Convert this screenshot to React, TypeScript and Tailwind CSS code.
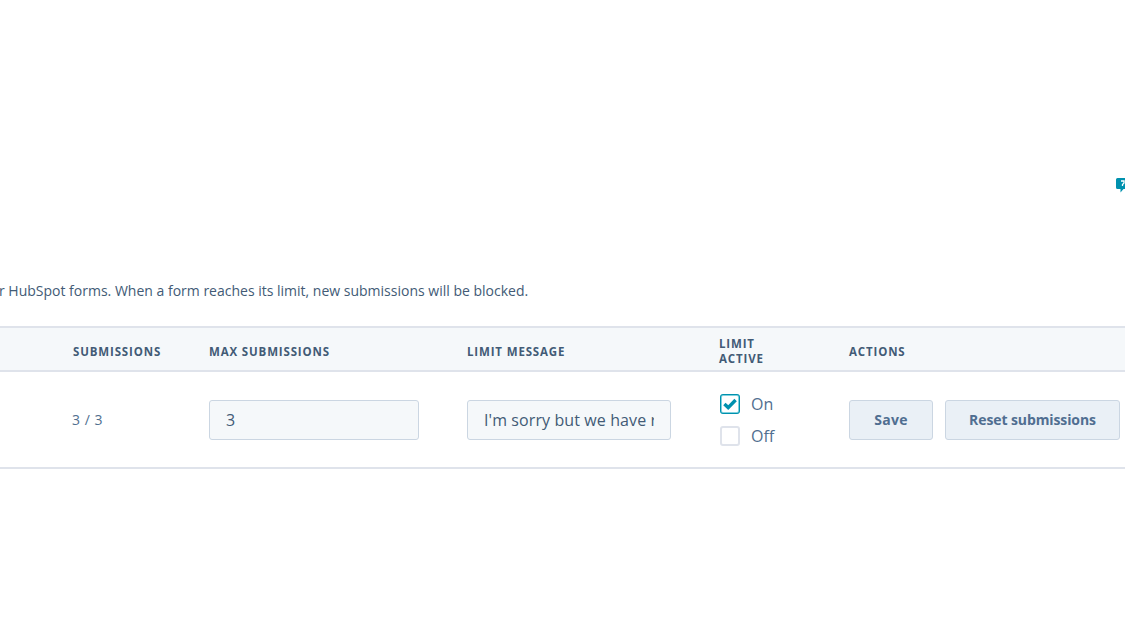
import React from "react";

const HeaderLabel = ({ children, className = "" }: { children: React.ReactNode; className?: string }) => (
  <div className={`text-[11.5px] leading-[15px] font-bold tracking-[0.85px] text-[#425b76] ${className}`}>{children}</div>
);

const Checkbox = ({ checked, label }: { checked?: boolean; label: string }) => (
  <div className="flex items-center gap-[11px] h-[20px]">
    <div
      className={`w-[20px] h-[20px] rounded-[3px] border-2 flex items-center justify-center ${
        checked ? "border-[#7fd1de] outline outline-1 outline-[#0091ae] -outline-offset-1" : "border-[#dfe3eb]"
      } bg-white`}
    >
      {checked && (
        <svg width="14" height="12" viewBox="0 0 14 12">
          <path d="M1.4 6 L5.2 9.6 L12.6 2" fill="none" stroke="#0091ae" strokeWidth="3.4" />
        </svg>
      )}
    </div>
    <span className="text-[16px] leading-[20px] text-[#516f90]">{label}</span>
  </div>
);

const App: React.FC = () => {
  return (
    <div
      className="relative w-[1125px] h-[633px] overflow-hidden bg-white text-[#425b76]"
      style={{ fontFamily: "'Open Sans', 'Liberation Sans', sans-serif" }}
    >
      <svg className="absolute left-[1115px] top-[178px]" width="10" height="15" viewBox="0 0 10 15">
        <path d="M2.5 0 H10 V11 H8.5 L5.5 14.5 V11 H2.5 Q1 11 1 9.5 V1.5 Q1 0 2.5 0 Z" fill="#0091ae" />
        <path d="M6 3 H9 V5 L7.5 6.5 V8" fill="none" stroke="#fff" strokeWidth="1.3" />
      </svg>

      <div className="pt-[282px]">
        <p className="text-[14px] leading-[18px] whitespace-nowrap -ml-[1px]">
          r HubSpot forms. When a form reaches its limit, new submissions will be blocked.
        </p>

        <div className="mt-[26px] h-[46px] flex items-center pl-[73px] pt-[3px] bg-[#f5f8fa] border-y-2 border-[#dfe3eb]">
          <HeaderLabel className="w-[136px] mt-px">SUBMISSIONS</HeaderLabel>
          <HeaderLabel className="w-[258px] mt-px">MAX SUBMISSIONS</HeaderLabel>
          <HeaderLabel className="w-[252px] mt-px">LIMIT MESSAGE</HeaderLabel>
          <HeaderLabel className="w-[130px]">
            LIMIT
            <br />
            ACTIVE
          </HeaderLabel>
          <HeaderLabel className="mt-px">ACTIONS</HeaderLabel>
        </div>

        <div className="h-[97px] flex items-center pl-[72px] border-b-2 border-[#dfe3eb]">
          <div className="w-[137px] text-[14px] tracking-[0.5px] text-[#516f90]">3 / 3</div>
          <div className="w-[258px]">
            <div className="w-[210px] h-[40px] flex items-center px-[16px] bg-[#f5f8fa] border border-[#cbd6e2] rounded-[3px] text-[16px]">
              3
            </div>
          </div>
          <div className="w-[252px]">
            <div className="w-[204px] h-[40px] flex items-center pl-[16px] pr-[16px] bg-[#f5f8fa] border border-[#cbd6e2] rounded-[3px] text-[16px] tracking-[0.1px] whitespace-nowrap overflow-hidden">
              <span className="block overflow-hidden">I'm sorry but we have reached our limit</span>
            </div>
          </div>
          <div className="w-[130px] pl-[1px] flex flex-col gap-[12px]">
            <Checkbox checked label="On" />
            <Checkbox label="Off" />
          </div>
          <div className="flex gap-[12px]">
            <button className="w-[84px] h-[40px] bg-[#eaf0f6] border border-[#cbd6e2] rounded-[3px] text-[14px] font-bold tracking-[0.3px] text-[#506e91]">
              Save
            </button>
            <button className="w-[175px] h-[40px] bg-[#eaf0f6] border border-[#cbd6e2] rounded-[3px] text-[14px] font-bold tracking-[-0.1px] text-[#506e91]">
              Reset submissions
            </button>
          </div>
        </div>
      </div>
    </div>
  );
};

export default App;
